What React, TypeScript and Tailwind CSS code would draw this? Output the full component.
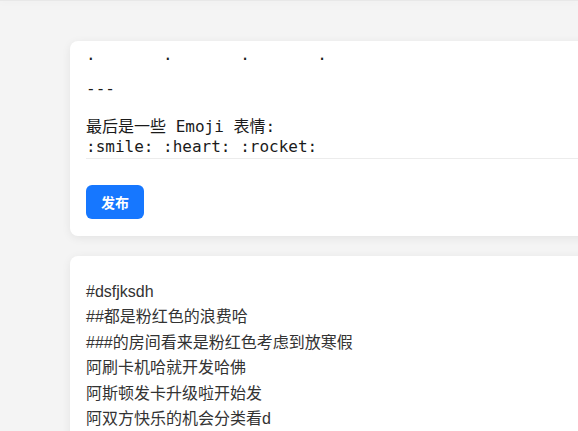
const editorLines = [
  { text: ".\t.\t.\t.", h: "h-[20px]" },
  { text: "", h: "h-[14px]" },
  { text: "---", h: "h-[20px]" },
  { text: "", h: "h-[18px]" },
  { text: "最后是一些 Emoji 表情:", h: "h-[20px]" },
  { text: ":smile: :heart: :rocket:", h: "h-[20px]" },
];

const postLines = [
  "#dsfjksdh",
  "##都是粉红色的浪费哈",
  "###的房间看来是粉红色考虑到放寒假",
  "阿刷卡机哈就开发哈佛",
  "阿斯顿发卡升级啦开始发",
  "阿双方快乐的机会分类看d",
];

const App = () => {
  return (
    <div className="h-screen w-screen overflow-hidden bg-[#f4f4f4] relative">
      {/* header shadow peeking from above */}
      <div className="absolute top-0 left-0 right-0 h-[1px] bg-[#e8e8e8] shadow-[0_1px_6px_rgba(0,0,0,0.08)]" />

      <div className="pt-[41px] pl-[70px] w-[1100px] flex flex-col gap-5">
        {/* editor card */}
        <section className="bg-white rounded-lg shadow-[0_2px_10px_rgba(0,0,0,0.07)] px-4 pt-2 pb-[17px]">
          <div className="h-[110px] overflow-hidden flex flex-col justify-end border-b border-[#ececec] pb-px [tab-size:8]">
            {editorLines.map((line, i) => (
              <div
                key={i}
                className={`${line.h} shrink-0 whitespace-pre text-[16px] leading-[20px] text-[#1a1a1a] font-['DejaVu_Sans_Mono','Noto_Sans_CJK_SC',monospace]`}
              >
                {line.text}
              </div>
            ))}
          </div>
          <button className="mt-[26px] h-[34px] px-[15px] rounded-md bg-[#1677ff] text-white text-[14px] font-semibold font-['Noto_Sans_CJK_SC',sans-serif]">
            发布
          </button>
        </section>

        {/* post card */}
        <section className="bg-white rounded-lg shadow-[0_2px_10px_rgba(0,0,0,0.07)] px-4 pt-[23px] pb-6">
          {postLines.map((line, i) => (
            <p
              key={i}
              className="text-[16px] leading-[25.4px] text-[#333] font-['Liberation_Sans','Noto_Sans_CJK_SC',sans-serif]"
            >
              {line}
            </p>
          ))}
        </section>
      </div>
    </div>
  );
};

export default App;
